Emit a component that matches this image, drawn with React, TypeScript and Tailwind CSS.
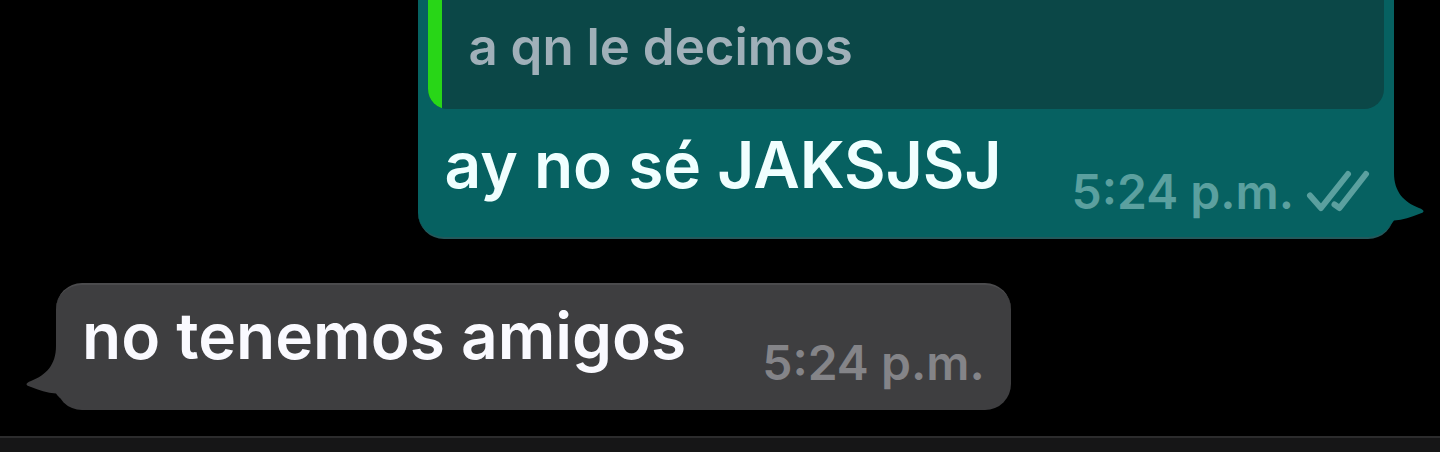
function ReadReceipt() {
  return (
    <svg viewBox="0 0 64 44" className="h-11 w-16 shrink-0" fill="none" stroke="currentColor" strokeWidth="6" strokeLinecap="round" strokeLinejoin="round" role="img" aria-label="Entregado">
      <path d="M4 25.500 15 38 42 4" />
      <path d="M28.500 34.500 33.500 38 60 4" />
    </svg>
  );
}

function Tail({ className }: { className: string }) {
  return (
    <svg viewBox="0 0 34 52" className={className} fill="currentColor" aria-hidden="true">
      <path d="M0 0H4C4 19 14 29 29 35Q38 38.500 29 41C21 44 13 47 4 47.500Q3 49 0 52Z" />
    </svg>
  );
}

function Time({ className }: { className: string }) {
  return <time dateTime="17:24" className={`whitespace-nowrap text-[48px] font-semibold leading-14 ${className}`}>5:24 p.m.</time>;
}

export default function App() {
  return (
    <main className="flex min-h-screen flex-col overflow-hidden bg-black font-['Inter',sans-serif]">
      <section className="flex flex-col gap-11 pb-[26px]">
        <article className="relative mr-[46px] w-fit self-end rounded-b-[26px] border-b-2 border-[#23595c] bg-[#066161]">
          <blockquote className="mx-[10px] flex overflow-hidden rounded-b-[20px] bg-[#0b4747]">
            <div className="w-[14px] bg-[#28d617]" />
            <p className="px-[26px] pt-[15px] pb-[30px] text-[51px] font-semibold leading-16 text-[#a0b0b9]">a qn le decimos</p>
          </blockquote>
          <div className="flex items-end gap-[70px] pt-4 pr-6 pb-[17px] pl-[26px]">
            <p className="mb-[15px] text-[64px] font-semibold leading-20 text-[#f0ffff]">ay no sé JAKSJSJ</p>
            <div className="flex items-center gap-3 text-[#5ba09f]">
              <Time className="" />
              <ReadReceipt />
            </div>
          </div>
          <Tail className="absolute -right-[30px] bottom-3 h-[52px] w-[34px] text-[#066161]" />
        </article>
        <article className="relative ml-14 w-fit rounded-[26px] border-t-2 border-[#4b4b4d] bg-[#3e3e40]">
          <div className="flex items-end gap-[76px] pt-[11px] pr-[26px] pb-[19px] pl-[26px]">
            <p className="mb-[15px] text-[64px] font-semibold leading-20 text-[#fafaff]">no tenemos amigos</p>
            <Time className="text-[#848488]" />
          </div>
          <Tail className="absolute bottom-3 -left-[30px] h-[52px] w-[34px] -scale-x-100 text-[#3e3e40]" />
        </article>
      </section>
      <footer className="flex-1 border-t-2 border-[#2c2c2d] bg-[#161617]" />
    </main>
  );
}
